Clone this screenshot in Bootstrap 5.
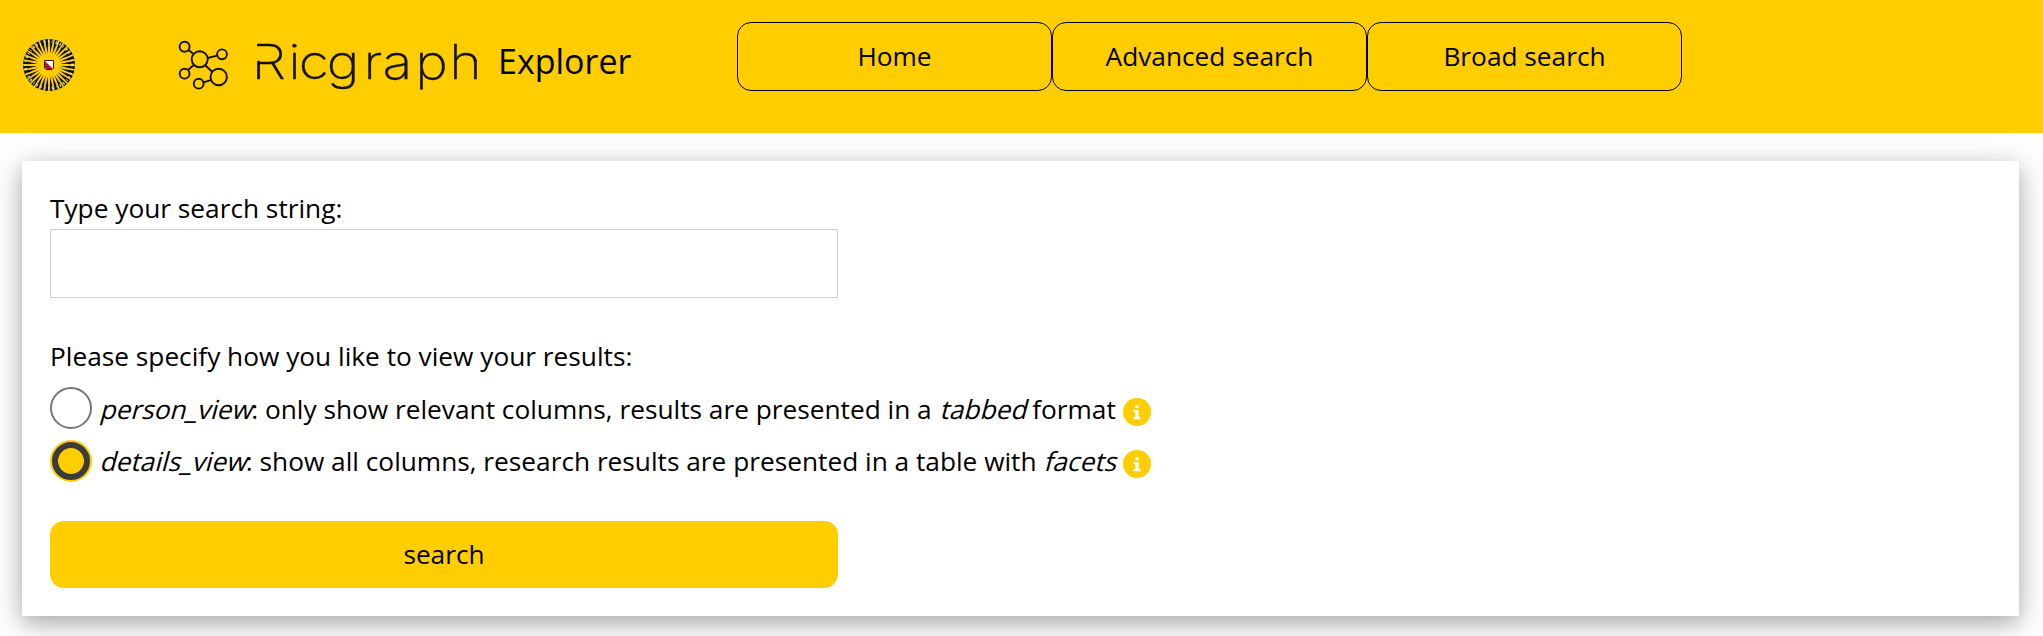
<!DOCTYPE html>
<html lang="en">
<head>
<meta charset="utf-8">
<meta name="viewport" content="width=device-width, initial-scale=1">
<title>Ricgraph Explorer</title>
<link href="https://cdn.jsdelivr.net/npm/bootstrap@5.3.0/dist/css/bootstrap.min.css" rel="stylesheet">
<style>
  :root { --uu-yellow: #ffcd00; }
  body { font-family: "Open Sans", sans-serif; font-size: 26.25px; line-height: 39.4px; color: #000; background: #fff; }
  .top-bar { height: 133px; background: var(--uu-yellow); padding: 22px 0 0 22px; position: relative; }
  .page { height: 636px; overflow: hidden; }
  .uu-logo { width: 54px; height: 54px; margin-top: 16px; }
  .ric-logo { width: 310px; height: 60px; margin: 12px 0 0 100px; overflow: visible; }
  .ric-word { font-family: Inter, sans-serif; font-weight: 200; font-size: 48px; }
  .product { font-size: 34px; line-height: 52px; margin: 13px 0 0 12px; width: 239px; }
  .nav-btn { width: 315px; height: 69px; border: 1px solid #000; border-radius: 14px; color: #000; font-size: 26.25px; line-height: 39.4px; padding: 14px 0 0; }
  .panel { margin: 28px 24px 0 22px; height: 455px; padding: 28px; background: #fff;
    box-shadow: 0 7px 17.5px rgba(0,0,0,.2), 0 7px 35px rgba(0,0,0,.19); }
  .search-field { width: 788px; height: 69px; border: 1px solid #ccc; border-radius: 0; margin-top: 1px; }
  .prompt { margin-top: 39px; }
  .choice { height: 52px; }
  .choices { margin-top: 9px; }
  .choice em { display: inline-block; font-style: normal; transform: skewX(-15deg); transform-origin: 0 75%; }
  .radio-dot.form-check-input { width: 42px; height: 42px; margin: 1px 7px 0 0; border: 2px solid #767676; flex: none; background: #fff; }
  .radio-dot.form-check-input:checked { margin-top: 2px; border-color: var(--uu-yellow); background: radial-gradient(circle, var(--uu-yellow) 12.5px, #3b3b3b 13.3px); }
  .choice label { padding-top: 4px; white-space: nowrap; }
  .info { width: 28px; height: 28px; margin: 12px 0 0 7px; }
  .btn-go { width: 788px; height: 67px; margin-top: 31px; border-radius: 14px; background: var(--uu-yellow); border: 0; font-size: 26.25px; line-height: 39.4px; color: #000; }
</style>
</head>
<body>
<div class="page">
<header class="top-bar d-flex align-items-start">
  <svg class="uu-logo flex-shrink-0" id="sun" viewBox="-27 -27 54 54" aria-hidden="true">
    <circle r="26" fill="#111"/>
    <g id="rays" fill="#ffcd00"></g>
    <circle r="11.500" fill="#ffcd00"/>
    <circle r="23.500" fill="none" stroke="#e8e8e8" stroke-width="3" stroke-dasharray="1.3 2.600 .8 3.200 1.800 2.400" opacity=".8"/>
    <path d="M-4.500-4.500h9v7.500l-1.500 1.500h-6l-1.500-1.500z" fill="#fff" stroke="#222" stroke-width="1"/>
    <path d="M-4-4L4 4h-6.500l-1.500-1.500z" fill="#c00a35"/>
  </svg>
  <svg class="ric-logo flex-shrink-0" viewBox="176 34 310 60" role="img" aria-label="Ricgraph">
    <g fill="none" stroke="#111" stroke-width="1.9">
      <circle cx="184.600" cy="46.700" r="5"/><circle cx="199.700" cy="59.300" r="8"/>
      <circle cx="222" cy="54.300" r="4.900"/><circle cx="184.600" cy="73.700" r="4.900"/>
      <circle cx="218.700" cy="77" r="8.200"/><circle cx="198.700" cy="83.700" r="4.900"/>
      <path d="M188.500 50l4.700 3.700M207.600 58l9.600-2.400M188 70l5.800-5M205.200 65.200l7 6.500M203.500 82.300l7.200-2.100"/>
    </g>
    <text class="ric-word" transform="scale(1.15 1)" y="79" x="218.600 250.600 259.800 284.200 316.200 332.600 361 390.600" fill="#111" stroke="#111" stroke-width=".35">Ricgraph</text>
    <path d="M252 46.300h9v14.500h-9z" fill="#ffcd00"/>
  </svg>
  <div class="product flex-shrink-0">Explorer</div>
  <nav class="d-flex">
    <a class="btn nav-btn" href="#">Home</a>
    <a class="btn nav-btn" href="#">Advanced search</a>
    <a class="btn nav-btn" href="#">Broad search</a>
  </nav>
</header>
<main class="panel">
  <form>
    <label class="d-block" for="q">Type your search string:</label>
    <input class="form-control search-field" id="q" type="text">
    <div class="prompt">Please specify how you like to view your results:</div>
    <div class="choices">
      <div class="choice d-flex align-items-start">
        <input class="form-check-input radio-dot" type="radio" name="view" id="v1">
        <label for="v1"><em>person_view</em>: only show relevant columns, results are presented in a <em>tabbed</em> format</label>
        <svg class="info" viewBox="0 0 28 28"><circle cx="14" cy="14" r="14" fill="#ffcd00"/><path d="M12.300 7.300h3.400v3h-3.400zM10.500 12h5.200v7h1.800v2.300h-7V19h1.800v-4.700h-1.800z" fill="#fff"/></svg>
      </div>
      <div class="choice d-flex align-items-start">
        <input class="form-check-input radio-dot" type="radio" name="view" id="v2" checked>
        <label for="v2"><em>details_view</em>: show all columns, research results are presented in a table with <em>facets</em></label>
        <svg class="info" viewBox="0 0 28 28"><circle cx="14" cy="14" r="14" fill="#ffcd00"/><path d="M12.300 7.300h3.400v3h-3.400zM10.500 12h5.200v7h1.800v2.300h-7V19h1.800v-4.700h-1.800z" fill="#fff"/></svg>
      </div>
    </div>
    <button class="btn btn-go d-block" type="button">search</button>
  </form>
</main>
</div>
<script src="https://cdn.jsdelivr.net/npm/bootstrap@5.3.0/dist/js/bootstrap.bundle.min.js"></script>
<script>
  // Sun emblem: yellow rays tapering outwards between dark wedges
  const ns = 'http://www.w3.org/2000/svg';
  for (let i = 0; i < 32; i++) {
    const ray = document.createElementNS(ns, 'path');
    ray.setAttribute('d', 'M-1.200-10L-.7-26.500H.7L1.200-10z');
    ray.setAttribute('transform', `rotate(${i * 11.25})`);
    document.getElementById('rays').append(ray);
  }
</script>
</body>
</html>
